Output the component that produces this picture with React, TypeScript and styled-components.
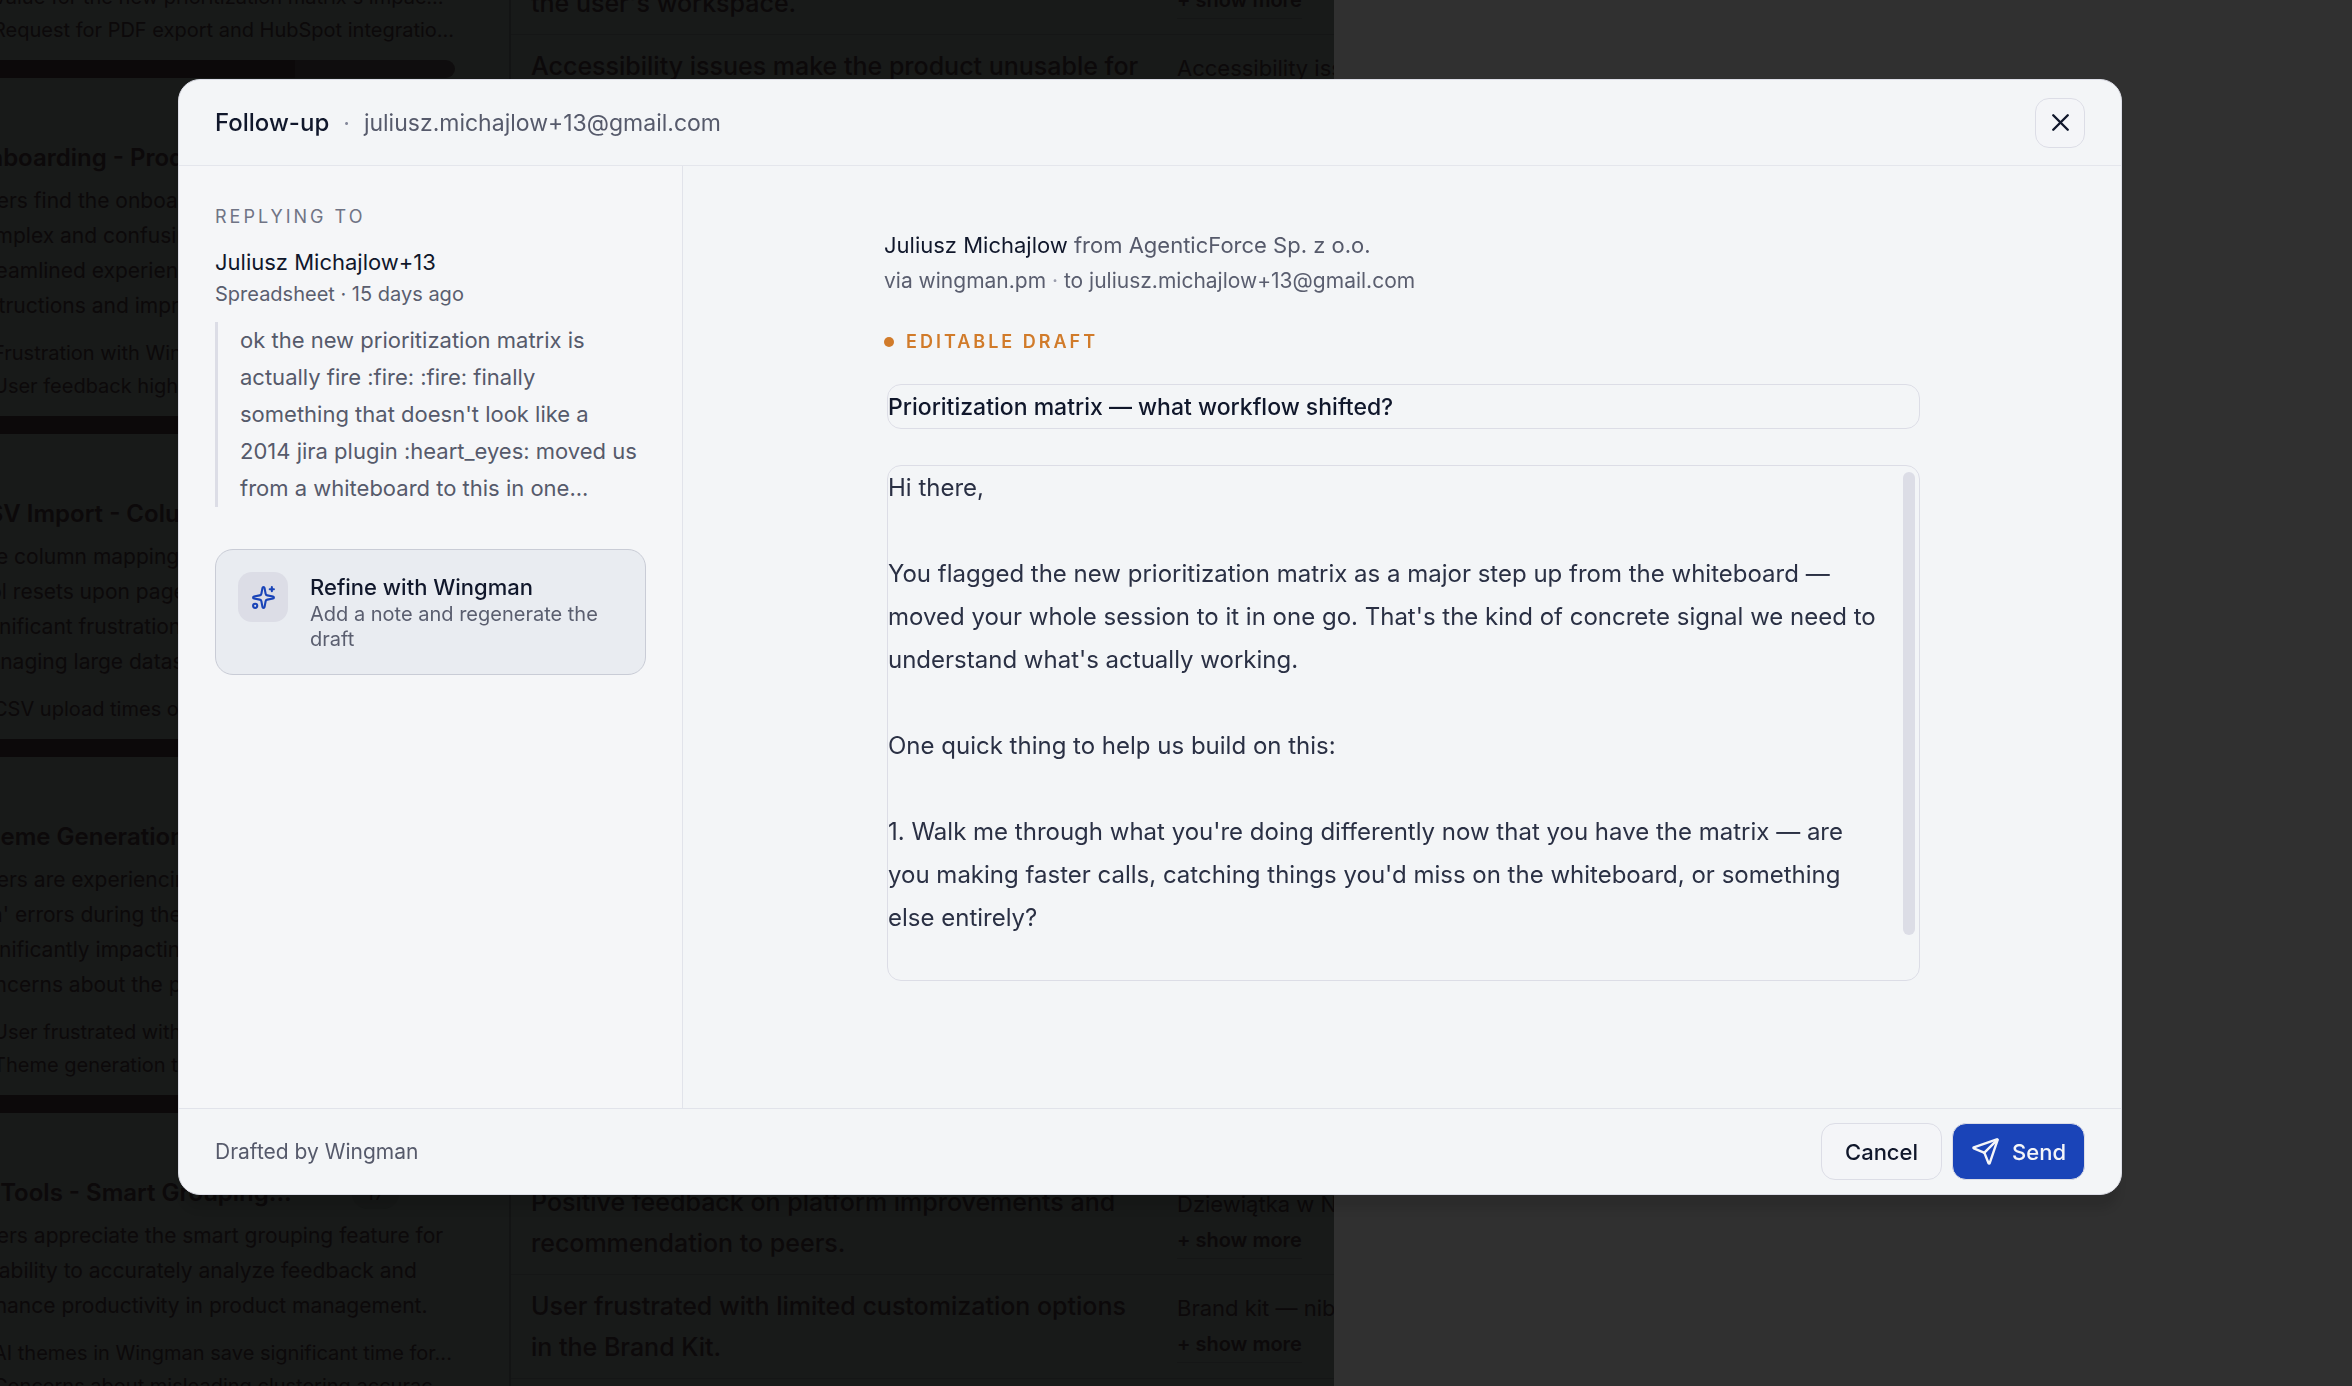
import React, { useState } from 'react';
import styled, { createGlobalStyle } from 'styled-components';
import { Send, Sparkles, X } from 'lucide-react';

const GlobalStyle = createGlobalStyle`
  *, *::before, *::after { box-sizing: border-box; }
  body {
    margin: 0;
    background: #303030;
    font-family: Inter, "Liberation Sans", sans-serif;
    overflow: hidden;
  }
  button, input, textarea { font: inherit; color: inherit; margin: 0; }
  p, h1, h2, h3, ul, blockquote { margin: 0; padding: 0; }
`;

/* ---------- Board behind the dialog ---------- */

const Board = styled.main`
  display: flex;
  width: 1334px;
  height: 100vh;
  overflow: hidden;
  background: #181a19;
  color: #0c090a;
`;

const ThemeColumn = styled.section`
  flex: 0 0 541px;
  min-width: 0;
  margin-left: -30px;
  padding-right: 54px;
  border-right: 2px solid #131414;
`;

const ThemeCard = styled.article<{ $cut?: boolean }>`
  padding-top: ${(p) => (p.$cut ? 0 : 64)}px;
  margin-top: ${(p) => (p.$cut ? -19 : 0)}px;
`;

const ThemeHead = styled.div`
  display: flex;
  align-items: center;
  gap: 60px;
  margin-bottom: 9px;
`;

const ThemeTitle = styled.h3`
  font-size: 24px;
  font-weight: 600;
  line-height: 32px;
  white-space: nowrap;
`;

const Count = styled.span`
  padding: 0 14px;
  border-radius: 16px;
  background: #161817;
  font-size: 20px;
  line-height: 32px;
`;

const ThemeText = styled.p`
  margin-bottom: 14px;
  font-size: 21px;
  line-height: 35px;
  white-space: pre;
`;

const Insights = styled.ul`
  padding-left: 23px;
  list-style: none;
  font-size: 20px;
  line-height: 33px;
  white-space: nowrap;
`;

const Meter = styled.div<{ $solid: number }>`
  height: 18px;
  margin-top: 13px;
  border-radius: 9px;
  background: linear-gradient(90deg, #0c090a ${(p) => p.$solid}%, #0f0d0e ${(p) => p.$solid}%);
`;

const Requests = styled.section`
  flex: 1;
  min-width: 0;
  display: flex;
  flex-direction: column;
  justify-content: space-between;
`;

const RequestRow = styled.div`
  display: grid;
  grid-template-columns: 646px 1fr;
  padding: 11px 0 10px 20px;
  border-bottom: 1px solid #151616;
`;

const RequestGroup = styled.div<{ $at: 'top' | 'bottom' }>`
  margin-top: ${(p) => (p.$at === 'top' ? -69 : 0)}px;
  margin-bottom: ${(p) => (p.$at === 'bottom' ? 7 : 0)}px;
`;

const RequestTitle = styled.h3`
  font-size: 25px;
  font-weight: 500;
  line-height: 41px;
  white-space: pre-line;
`;

const Quotes = styled.div`
  padding-top: 4px;
  font-size: 22px;
  line-height: 36px;
  white-space: nowrap;
  overflow: hidden;
`;

const ShowMore = styled.button`
  display: block;
  padding: 0;
  border: 0;
  border-bottom: 1px solid #151616;
  background: none;
  font-size: 20px;
  font-weight: 600;
  line-height: 36px;
`;

/* ---------- Dialog ---------- */

const Overlay = styled.div`
  position: fixed;
  inset: 0;
  display: flex;
  padding: 79px 230px 191px 178px;
`;

const Dialog = styled.div`
  flex: 1;
  min-width: 0;
  display: flex;
  flex-direction: column;
  border: 1px solid #dcdde6;
  border-radius: 22px;
  background: #f3f5f7;
  color: #10172b;
  box-shadow: 0 18px 8px -4px rgba(0, 0, 0, 0.1);
  overflow: hidden;
`;

const Header = styled.header`
  display: flex;
  align-items: center;
  justify-content: space-between;
  height: 86px;
  padding: 0 36px;
  border-bottom: 1px solid #e4e6ec;
`;

const Heading = styled.div`
  display: flex;
  align-items: center;
  gap: 14px;
  line-height: 32px;
`;

const Title = styled.h1`
  font-size: 24px;
  font-weight: 500;
`;

const Recipient = styled.span`
  font-size: 23px;
  color: #565a6b;
`;

const Separator = styled.span`
  font-size: 23px;
  color: #84889a;
`;

const OutlineButton = styled.button`
  display: inline-flex;
  align-items: center;
  justify-content: center;
  border: 1px solid #dcdde6;
  border-radius: 14px;
  background: #f4f5f8;
  color: #10172b;
`;

const CloseButton = styled(OutlineButton)`
  width: 50px;
  height: 50px;
  padding: 0;
`;

const Body = styled.div`
  flex: 1;
  min-height: 0;
  display: flex;
`;

const Sidebar = styled.aside`
  flex: 0 0 504px;
  padding: 38px 36px;
  border-right: 1px solid #e1e3ea;
  background: #f5f6f8;
`;

const Overline = styled.h2`
  margin-bottom: 15px;
  font-size: 18px;
  font-weight: 400;
  line-height: 26px;
  letter-spacing: 3px;
  text-transform: uppercase;
  color: #707485;
`;

const Sender = styled.p`
  font-size: 22px;
  line-height: 34px;
`;

const Meta = styled.p`
  font-size: 20px;
  line-height: 30px;
  color: #5a5e6f;
`;

const Quote = styled.blockquote`
  margin: 13px 0 42px;
  padding-left: 22px;
  border-left: 3px solid #dcdde6;
  font-size: 22px;
  line-height: 37px;
  color: #565a6b;
  white-space: pre-line;
`;

const RefineCard = styled.button`
  display: flex;
  align-items: flex-start;
  gap: 22px;
  width: 100%;
  padding: 22px;
  border: 1px solid #c9ccd6;
  border-radius: 18px;
  background: #e9ecf1;
  text-align: left;
`;

const IconTile = styled.span`
  flex: none;
  display: grid;
  place-items: center;
  width: 50px;
  height: 50px;
  border-radius: 14px;
  background: #dcdde6;
  color: #1a44b8;
`;

const RefineText = styled.span`
  display: flex;
  flex-direction: column;
`;

const RefineTitle = styled.span`
  font-size: 22px;
  font-weight: 500;
  line-height: 30px;
`;

const RefineHint = styled.span`
  font-size: 20px;
  line-height: 25px;
  color: #5a5e6f;
`;

const Compose = styled.section`
  flex: 1;
  min-width: 0;
  padding: 61px 36px 36px;
`;

const Letter = styled.form`
  max-width: 1036px;
  margin: 0 auto;
`;

const From = styled.p`
  font-size: 22px;
  line-height: 36px;
  color: #565a6b;

  strong { font-weight: 400; color: #10172b; }
`;

const Route = styled.p`
  font-size: 21px;
  line-height: 36px;
  color: #5a5e6f;

  span { color: #9a9dac; }
`;

const DraftTag = styled.p`
  display: flex;
  align-items: center;
  gap: 12px;
  margin: 30px 0 29px;
  font-size: 18px;
  font-weight: 600;
  line-height: 26px;
  letter-spacing: 3px;
  text-transform: uppercase;
  color: #d17b2a;

  &::before {
    content: "";
    width: 10px;
    height: 10px;
    border-radius: 5px;
    background: #d17b2a;
  }
`;

const Fields = styled.div`
  display: grid;
  gap: 36px;
  padding-left: 3px;
`;

const SubjectInput = styled.input`
  width: 100%;
  height: 45px;
  padding: 0;
  border: 1px solid #dcdde6;
  border-radius: 14px;
  background: transparent;
  font-size: 23px;
  font-weight: 500;
  outline: none;
`;

const MessageBox = styled.div`
  position: relative;
  display: flex;
  border: 1px solid #dcdde6;
  border-radius: 14px;
  overflow: hidden;
`;

const MessageInput = styled.textarea`
  flex: 1;
  height: 514px;
  padding: 0 36px 0 0;
  border: 0;
  background: transparent;
  font-size: 24px;
  line-height: 43px;
  color: #2a3044;
  resize: none;
  outline: none;
  scrollbar-width: none;
`;

const ScrollThumb = styled.span`
  position: absolute;
  top: 6px;
  right: 4px;
  width: 12px;
  height: 90%;
  border-radius: 6px;
  background: #dcdde6;
`;

const Footer = styled.footer`
  display: flex;
  align-items: center;
  justify-content: space-between;
  height: 86px;
  padding: 0 36px;
  border-top: 1px solid #e1e3ea;
`;

const FooterNote = styled.p`
  font-size: 21px;
  color: #565a6b;
`;

const Actions = styled.div`
  display: flex;
  gap: 10px;
`;

const CancelButton = styled(OutlineButton)`
  height: 57px;
  padding: 0 23px;
  font-size: 22px;
  font-weight: 500;
`;

const SendButton = styled(CancelButton)`
  gap: 12px;
  padding: 0 18px;
  background: #1a44b8;
  color: #f4f5f8;
`;

/* ---------- Content ---------- */

type Theme = { title?: string; count?: number; text?: string; insights: string[]; solid: number };

const themes: Theme[] = [
  {
    insights: [
      'Value for the new prioritization matrix\'s impac...',
      'Request for PDF export and HubSpot integratio...',
    ],
    solid: 67,
  },
  {
    title: 'Onboarding - Product Tour...',
    text: 'Users find the onboarding process\ncomplex and confusing, wanting a\nstreamlined experience with clear\ninstructions and improved guidance.',
    insights: ['Frustration with Wingman onboarding', 'User feedback highlights onboarding'],
    solid: 100,
  },
  {
    title: 'CSV Import - Column Mapping',
    text: 'The column mapping in the import\ntool resets upon page reload, causing\nsignificant frustration for users\nmanaging large datasets.',
    insights: ['CSV upload times out on large files'],
    solid: 100,
  },
  {
    title: 'Theme Generation - Errors',
    text: 'Users are experiencing repeated\nrun\' errors during theme generation,\nsignificantly impacting work and\nconcerns about the product.',
    insights: ['User frustrated with theme errors', 'Theme generation times out'],
    solid: 100,
  },
  {
    title: 'AI Tools - Smart Grouping...',
    count: 17,
    text: 'Users appreciate the smart grouping feature for\nits ability to accurately analyze feedback and\nenhance productivity in product management.',
    insights: [
      'AI themes in Wingman save significant time for...',
      'Concerns about misleading clustering accurac...',
    ],
    solid: 100,
  },
];

type Request = { title: string; quote: string };

const topRequests: Request[] = [
  { title: 'Collected feedback does not appear in\nthe user\'s workspace.', quote: 'Feedback missing' },
  { title: 'Accessibility issues make the product unusable for\nsome users.', quote: 'Accessibility issues' },
];

const bottomRequests: Request[] = [
  { title: 'Positive feedback on platform improvements and\nrecommendation to peers.', quote: 'Dziewiątka w NPS' },
  { title: 'User frustrated with limited customization options\nin the Brand Kit.', quote: 'Brand kit — nib' },
];

const quoteText = `ok the new prioritization matrix is
actually fire :fire: :fire: finally
something that doesn't look like a
2014 jira plugin :heart_eyes: moved us
from a whiteboard to this in one...`;

const draft = `Hi there,

You flagged the new prioritization matrix as a major step up from the whiteboard — moved your whole session to it in one go. That's the kind of concrete signal we need to understand what's actually working.

One quick thing to help us build on this:

1. Walk me through what you're doing differently now that you have the matrix — are you making faster calls, catching things you'd miss on the whiteboard, or something else entirely?
`;

function RequestList({ items, at }: { items: Request[]; at: 'top' | 'bottom' }) {
  return (
    <RequestGroup $at={at}>
      {items.map((r) => (
        <RequestRow key={r.title}>
          <RequestTitle>{r.title}</RequestTitle>
          <Quotes>
            {r.quote}
            <ShowMore type="button">+ show more</ShowMore>
          </Quotes>
        </RequestRow>
      ))}
    </RequestGroup>
  );
}

export default function App() {
  const [subject, setSubject] = useState('Prioritization matrix — what workflow shifted?');
  const [message, setMessage] = useState(draft);

  return (
    <>
      <GlobalStyle />
      <Board>
        <ThemeColumn>
          {themes.map((t, i) => (
            <ThemeCard key={i} $cut={!t.title}>
              {t.title && (
                <ThemeHead>
                  <ThemeTitle>{t.title}</ThemeTitle>
                  {t.count && <Count>{t.count}</Count>}
                </ThemeHead>
              )}
              {t.text && <ThemeText>{t.text}</ThemeText>}
              <Insights>
                {t.insights.map((s) => (
                  <li key={s}>{s}</li>
                ))}
              </Insights>
              <Meter $solid={t.solid} />
            </ThemeCard>
          ))}
        </ThemeColumn>
        <Requests>
          <RequestList items={topRequests} at="top" />
          <RequestList items={bottomRequests} at="bottom" />
        </Requests>
      </Board>

      <Overlay>
        <Dialog role="dialog" aria-modal="true" aria-labelledby="dialog-title">
          <Header>
            <Heading>
              <Title id="dialog-title">Follow-up</Title>
              <Separator>·</Separator>
              <Recipient>juliusz.michajlow+13@gmail.com</Recipient>
            </Heading>
            <CloseButton type="button" aria-label="Close">
              <X size={29} strokeWidth={2} />
            </CloseButton>
          </Header>

          <Body>
            <Sidebar>
              <Overline>Replying to</Overline>
              <Sender>Juliusz Michajlow+13</Sender>
              <Meta>Spreadsheet · 15 days ago</Meta>
              <Quote>{quoteText}</Quote>
              <RefineCard type="button">
                <IconTile>
                  <Sparkles size={25} strokeWidth={2} />
                </IconTile>
                <RefineText>
                  <RefineTitle>Refine with Wingman</RefineTitle>
                  <RefineHint>Add a note and regenerate the draft</RefineHint>
                </RefineText>
              </RefineCard>
            </Sidebar>

            <Compose>
              <Letter id="follow-up" onSubmit={(e) => e.preventDefault()}>
                <From>
                  <strong>Juliusz Michajlow</strong> from AgenticForce Sp. z o.o.
                </From>
                <Route>
                  via wingman.pm <span>·</span> to juliusz.michajlow+13@gmail.com
                </Route>
                <DraftTag>Editable draft</DraftTag>
                <Fields>
                  <SubjectInput
                    aria-label="Subject"
                    value={subject}
                    onChange={(e) => setSubject(e.target.value)}
                  />
                  <MessageBox>
                    <MessageInput
                      aria-label="Message"
                      value={message}
                      onChange={(e) => setMessage(e.target.value)}
                    />
                    <ScrollThumb aria-hidden="true" />
                  </MessageBox>
                </Fields>
              </Letter>
            </Compose>
          </Body>

          <Footer>
            <FooterNote>Drafted by Wingman</FooterNote>
            <Actions>
              <CancelButton type="button">Cancel</CancelButton>
              <SendButton type="submit" form="follow-up">
                <Send size={29} strokeWidth={2} />
                Send
              </SendButton>
            </Actions>
          </Footer>
        </Dialog>
      </Overlay>
    </>
  );
}
